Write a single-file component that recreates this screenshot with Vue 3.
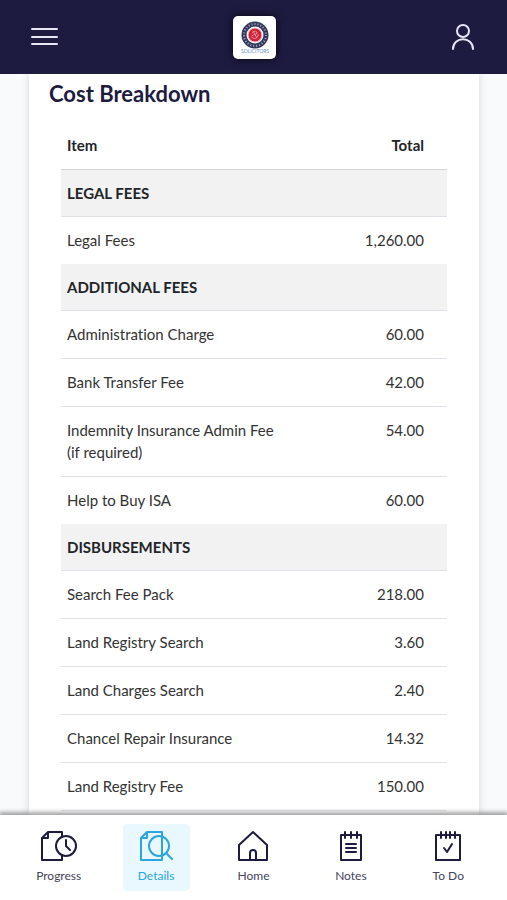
<script setup>
import { ref } from "vue";

const active = ref("Details");

const tabs = ["Progress", "Details", "Home", "Notes", "To Do"];

const sections = ref([
  {
    title: "LEGAL FEES",
    items: [{ name: "Legal Fees", total: "1,260.00" }],
  },
  {
    title: "ADDITIONAL FEES",
    items: [
      { name: "Administration Charge", total: "60.00" },
      { name: "Bank Transfer Fee", total: "42.00" },
      { name: "Indemnity Insurance Admin Fee (if required)", total: "54.00" },
      { name: "Help to Buy ISA", total: "60.00" },
    ],
  },
  {
    title: "DISBURSEMENTS",
    items: [
      { name: "Search Fee Pack", total: "218.00" },
      { name: "Land Registry Search", total: "3.60" },
      { name: "Land Charges Search", total: "2.40" },
      { name: "Chancel Repair Insurance", total: "14.32" },
      { name: "Land Registry Fee", total: "150.00" },
    ],
  },
]);
</script>

<template>
  <div class="app">
    <header class="top-bar">
      <button class="icon-btn" aria-label="Menu">
        <svg width="28" height="20" viewBox="0 0 28 20">
          <path d="M2 2H27M2 10H27M2 17H27" />
        </svg>
      </button>
      <div class="logo">
        <svg width="34" height="36" viewBox="0 0 34 36">
          <circle class="ring" cx="17" cy="16" r="11" />
          <circle class="ring-marks" cx="17" cy="16" r="11" />
          <circle class="seal" cx="17" cy="16" r="7" />
          <path
            class="seal-mark"
            d="M14 14c2-3 5-2 5 0s-4 1-5 3 2 3 4 2 3-3 2-4M15 12l4 7"
          />
          <text x="17" y="34" text-anchor="middle">SOLICITORS</text>
        </svg>
      </div>
      <button class="icon-btn" aria-label="Account">
        <svg width="24" height="26" viewBox="0 0 24 26">
          <circle cx="12" cy="7" r="6" />
          <path d="M2 25C2 12 22 12 22 25" />
        </svg>
      </button>
    </header>

    <main class="content">
      <section class="card">
        <h2>Cost Breakdown</h2>
        <div class="table-wrap">
          <table>
            <thead>
              <tr>
                <th scope="col">Item</th>
                <th scope="col" class="total">Total</th>
              </tr>
            </thead>
            <tbody v-for="section in sections" :key="section.title">
              <tr class="section-row">
                <th colspan="2" scope="rowgroup">{{ section.title }}</th>
              </tr>
              <tr v-for="item in section.items" :key="item.name">
                <td>{{ item.name }}</td>
                <td class="total">{{ item.total }}</td>
              </tr>
            </tbody>
          </table>
        </div>
      </section>
    </main>

    <nav class="bottom-nav">
      <button
        v-for="tab in tabs"
        :key="tab"
        class="tab"
        :class="{ active: tab === active }"
        @click="active = tab"
      >
        <svg v-if="tab === 'Progress'" width="38" height="32" viewBox="0 0 38 32">
          <path d="M22 7V2H8L2 8V30H22V25M8 2V8H2" />
          <circle cx="26" cy="16" r="10" />
          <path d="M26 10V16L30 20" />
        </svg>
        <svg v-else-if="tab === 'Details'" width="34" height="32" viewBox="0 0 34 32">
          <path d="M23 7V2H8L2 8V30H23V25M8 2V8H2M23 7V25" />
          <circle cx="20" cy="16" r="10" />
          <path d="M27 23L33 29" />
        </svg>
        <svg v-else-if="tab === 'Home'" width="32" height="32" viewBox="0 0 32 32">
          <path d="M2 15L16 2L30 15V30H2Z" />
          <path d="M13 30V23C13 19 19 19 19 23V30" />
        </svg>
        <svg v-else-if="tab === 'Notes'" width="24" height="32" viewBox="0 0 24 32">
          <path d="M2 5H22V30H2ZM6 2V8M12 2V8M18 2V8" />
          <path d="M7 14H17M7 18H17M7 22H17" />
        </svg>
        <svg v-else width="28" height="32" viewBox="0 0 28 32">
          <path d="M2 5H26V30H2ZM7 2V8M12 2V8M16 2V8M21 2V8" />
          <path d="M10 18L13 22L18 14" />
        </svg>
        <span>{{ tab }}</span>
      </button>
    </nav>
  </div>
</template>

<style>
body {
  margin: 0;
  background-color: #f8fafc;
}
</style>

<style scoped>
.app {
  display: flex;
  flex-direction: column;
  height: 100vh;
  font-family: Lato, "Open Sans", sans-serif;
  font-variant-ligatures: none;
  color: #333;
}

.top-bar {
  display: flex;
  flex: none;
  justify-content: space-between;
  align-items: center;
  height: 74px;
  padding: 0 32px 0 30px;
  box-sizing: border-box;
  background-color: #1d1b40;
}

button {
  padding: 0;
  border: none;
  background: none;
  font-family: inherit;
  cursor: pointer;
}

svg {
  display: block;
  fill: none;
  stroke: currentColor;
  stroke-width: 2;
  stroke-linecap: round;
  stroke-linejoin: round;
}

.icon-btn {
  color: #e6e6f5;
}

.logo {
  display: flex;
  justify-content: center;
  align-items: center;
  width: 43px;
  height: 43px;
  border-radius: 5px;
  background-color: #fff;
  box-shadow: 0 0 8px rgba(0, 0, 0, 0.8);
}

.ring {
  stroke: #34395e;
  stroke-width: 5;
}

.ring-marks {
  stroke: #a9aec4;
  stroke-width: 2;
  stroke-dasharray: 1 2;
  stroke-linecap: butt;
}

.seal {
  fill: #cf2438;
  stroke: #e9c9d2;
  stroke-width: 1;
}

.seal-mark {
  stroke: #ee8e98;
  stroke-width: 1;
}

.logo text {
  fill: #5f8fbd;
  stroke: none;
  font-size: 5px;
}

.content {
  flex: 1;
  min-height: 0;
  overflow-y: auto;
  scrollbar-width: none;
  padding: 0 28px 0 29px;
}

.card {
  min-height: 100%;
  padding: 8px 20px 0;
  box-sizing: border-box;
  background-color: #fff;
  box-shadow: 0 0 8px rgba(0, 0, 0, 0.15);
}

h2 {
  margin: 0;
  color: #1d1b40;
  font-size: 22px;
  line-height: 24px;
}

.table-wrap {
  padding: 16px 12px 0;
}

table {
  width: 100%;
  border-collapse: separate;
  border-spacing: 0;
  font-size: 15px;
  line-height: 22px;
}

th,
td {
  padding: 12px 6px 13px;
  border-bottom: 1px solid #dee2e6;
  text-align: left;
  vertical-align: top;
}

th {
  color: #212529;
}

thead th {
  border-bottom: 1px solid #d2d4d6;
}

.total {
  width: 42%;
  box-sizing: border-box;
  padding-right: 23px;
  text-align: right;
}

.section-row th {
  padding-bottom: 12px;
  background-color: #f2f2f2;
}

tbody:not(:last-child) tr:last-child td {
  border-bottom: none;
}

.bottom-nav {
  position: relative;
  display: grid;
  flex: none;
  grid-template-columns: repeat(5, 1fr);
  justify-items: center;
  padding: 9px 10px;
  background-color: #fff;
  box-shadow: 0 -2px 4px 1px rgba(0, 0, 0, 0.35);
}

.tab {
  display: flex;
  flex-direction: column;
  align-items: center;
  gap: 6px;
  width: 67px;
  height: 67px;
  padding-top: 6px;
  border-radius: 5px;
  color: #1d1b40;
  font-size: 12px;
  line-height: 16px;
}

.tab span {
  color: #44445a;
}

.tab.active {
  background-color: #e8f8fe;
}

.tab.active,
.tab.active span {
  color: #2ba6de;
}
</style>
